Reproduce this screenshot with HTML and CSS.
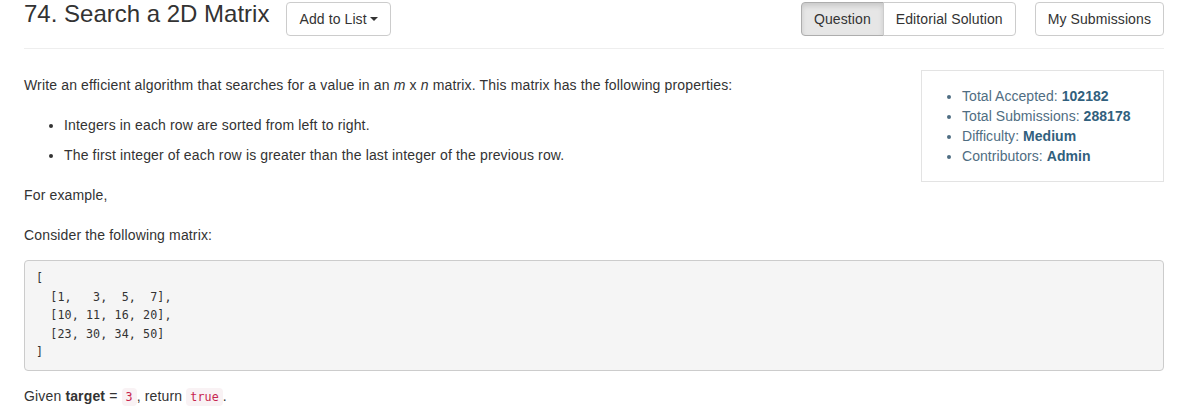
FILE: index.html
```html
<!DOCTYPE html>
<html>
<head>
<meta charset="utf-8">
<link rel="stylesheet" href="styles.css">
</head>
<body>
<div class="container">
  <div class="header">
    <h3 class="title">74. Search a 2D Matrix</h3>
    <button class="btn add-btn">Add to List<span class="caret"></span></button>
    <div class="btn-group">
      <button class="btn btn-left active">Question</button><button class="btn btn-right">Editorial Solution</button>
    </div>
    <button class="btn subs-btn">My Submissions</button>
  </div>
  <div class="main">
    <div class="side">
      <ul class="side-list">
        <li>Total Accepted: <b>102182</b></li>
        <li>Total Submissions: <b>288178</b></li>
        <li>Difficulty: <b>Medium</b></li>
        <li>Contributors: <b>Admin</b></li>
      </ul>
    </div>
    <p class="first">Write an efficient algorithm that searches for a value in an <i>m</i> x <i>n</i> matrix. This matrix has the following properties:</p>
    <ul class="props">
      <li>Integers in each row are sorted from left to right.</li>
      <li>The first integer of each row is greater than the last integer of the previous row.</li>
    </ul>
    <p>For example,</p>
    <p class="before-pre">Consider the following matrix:</p>
<pre class="code">[
  [1,   3,  5,  7],
  [10, 11, 16, 20],
  [23, 30, 34, 50]
]</pre>
    <p>Given <b>target</b> = <code>3</code>, return <code>true</code>.</p>
  </div>
</div>
</body>
</html>
```

FILE: styles.css
```css
html, body {
  margin: 0;
  padding: 0;
  background: #fff;
}
body {
  font-family: "Liberation Sans", Arial, Helvetica, sans-serif;
  font-size: 14px;
  line-height: 20px;
  color: #333;
}
.container {
  padding: 0 29px 0 24px;
}
.header {
  display: flex;
  align-items: flex-start;
  padding-top: 1px;
  padding-bottom: 12px;
  border-bottom: 1px solid #eee;
}
.title {
  margin: 0;
  font-size: 24px;
  font-weight: 500;
  line-height: 26.4px;
  color: #333;
}
.btn {
  font-family: "Liberation Sans", Arial, Helvetica, sans-serif;
  font-size: 14px;
  line-height: 20px;
  letter-spacing: 0.1px;
  color: #333;
  background: #fff;
  border: 1px solid #ccc;
  border-radius: 4px;
  padding: 6px 12px;
  margin: 1px 0 0 0;
  cursor: pointer;
  display: inline-flex;
  align-items: center;
}
.add-btn {
  margin-left: 17px;
}
.caret {
  display: inline-block;
  width: 0;
  height: 0;
  margin-left: 3px;
  border-top: 4px solid #333;
  border-left: 4px solid transparent;
  border-right: 4px solid transparent;
}
.btn-group {
  margin-left: auto;
  display: flex;
}
.btn-left {
  border-top-right-radius: 0;
  border-bottom-right-radius: 0;
}
.btn-right {
  border-top-left-radius: 0;
  border-bottom-left-radius: 0;
  margin-left: -1px;
}
.btn.active {
  background: #e6e6e6;
  border-color: #adadad;
  box-shadow: inset 0 3px 5px rgba(0,0,0,.125);
}
.subs-btn {
  margin-left: 19px;
}
.main {
  padding-top: 21px;
  letter-spacing: 0.15px;
}
.side {
  float: right;
  width: 241px;
  border: 1px solid #e3e3e3;
  padding: 15px 0;
  margin-left: 20px;
  letter-spacing: 0.05px;
}
.side-list {
  margin: 0;
  padding-left: 40px;
  color: #4f6d82;
}
.side-list b {
  color: #31607d;
}
p {
  margin: 0 0 20px;
}
p.first {
  margin-top: 5px;
}
p.before-pre {
  margin-bottom: 15px;
}
.props {
  margin: 0 0 20px;
  padding-left: 40px;
}
.props li + li {
  margin-top: 10px;
}
.code {
  clear: both;
  margin: 0 0 15px;
  padding: 8px 11px;
  background: #f5f5f5;
  border: 1px solid #ccc;
  border-radius: 4px;
  font-family: "DejaVu Sans Mono", "Liberation Mono", monospace;
  font-size: 11.7px;
  line-height: 18.5px;
  letter-spacing: 0.1px;
  color: #333;
}
code {
  font-family: "DejaVu Sans Mono", "Liberation Mono", monospace;
  font-size: 11.7px;
  letter-spacing: 0.1px;
  color: #c7254e;
  background: #f9f2f4;
  padding: 2px 4px;
  border-radius: 4px;
}
```
